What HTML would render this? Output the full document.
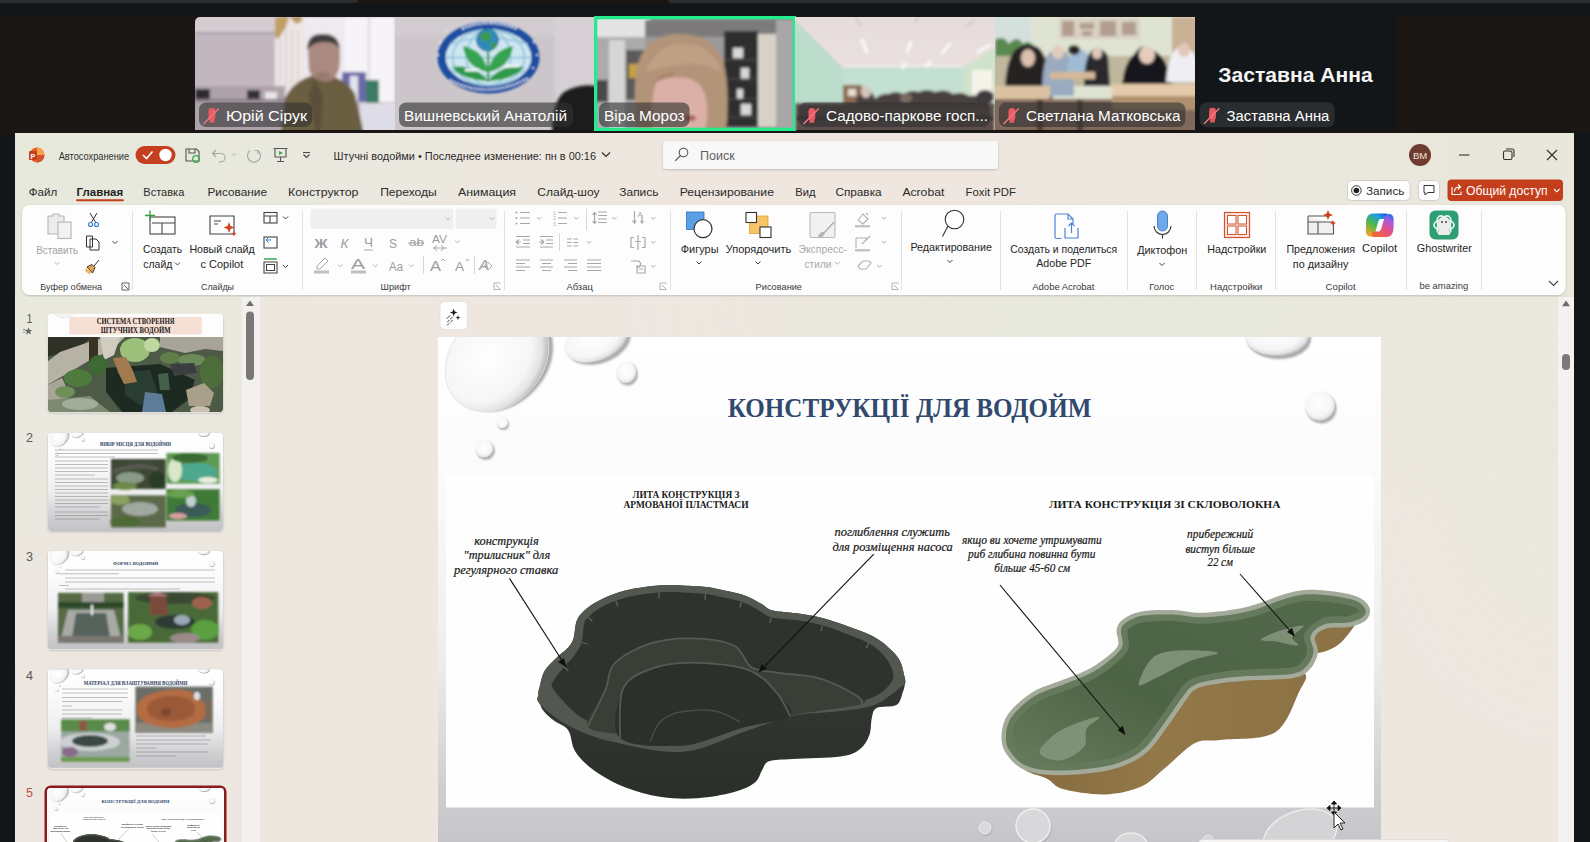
<!DOCTYPE html>
<html><head><meta charset="utf-8">
<style>
*{margin:0;padding:0;box-sizing:border-box}
html,body{width:1590px;height:842px;overflow:hidden;background:#1a1614;font-family:"Liberation Sans",sans-serif}
.a{position:absolute}
</style></head><body>
<div class="a" style="left:0;top:0;width:358px;height:3px;background:#2d2d2d;border-bottom-right-radius:4px"></div>
<div class="a" style="left:668px;top:0;width:922px;height:3px;background:#2d2d2d;border-bottom-left-radius:4px"></div>
<div class="a" style="left:0;top:3px;width:1590px;height:12px;background:#121619"></div>
<div class="a" style="left:0;top:135px;width:15px;height:707px;background:#121619"></div>
<div class="a" style="left:1574px;top:133px;width:16px;height:709px;background:#121619"></div>
<div class="a" style="left:1195px;top:15px;width:201px;height:115px;background:#121619"></div>
<div class="a" style="left:15px;top:133px;width:1559px;height:709px;background:linear-gradient(90deg,#e6e9dc 0%,#ebe8df 25%,#efe6df 45%,#eee6df 62%,#ebe7de 80%,#e8e7db 100%)"></div>

<svg class="a" style="left:0;top:0" width="1590" height="135" viewBox="0 0 1590 135" font-family="Liberation Sans, sans-serif">
<defs>
 <filter id="vb" x="-5%" y="-5%" width="110%" height="110%"><feGaussianBlur stdDeviation="1.4"/></filter>
 <filter id="vb2" x="-20%" y="-20%" width="140%" height="140%"><feGaussianBlur stdDeviation="2.5"/></filter>
 <clipPath id="t1"><path d="M195 22 a5 5 0 0 1 5 -5 h195 v113 h-200 z"/></clipPath>
 <clipPath id="t2"><rect x="395" y="17" width="200" height="113"/></clipPath>
 <clipPath id="t3"><rect x="595" y="17" width="200" height="113"/></clipPath>
 <clipPath id="t4"><rect x="795" y="17" width="200" height="113"/></clipPath>
 <clipPath id="t5"><rect x="995" y="17" width="200" height="113"/></clipPath>
 <linearGradient id="ceil4" x1="0" y1="0" x2="0" y2="1"><stop offset="0" stop-color="#e6dcdc"/><stop offset="1" stop-color="#eee4e2"/></linearGradient>
</defs>
<!-- tile 1 -->
<g clip-path="url(#t1)">
 <g filter="url(#vb)">
  <rect x="190" y="12" width="210" height="123" fill="#c3b7bf"/>
  <rect x="190" y="12" width="90" height="21" fill="#d6ccd2"/>
  <path d="M195 33 h85" stroke="#a89ca8" stroke-width="2"/>
  <rect x="275" y="17" width="30" height="80" fill="#ece6e6"/>
  <g stroke="#d8d0d0" stroke-width="1.5"><path d="M280 30 v60 M286 30 v62 M292 30 v64 M298 30 v65"/></g>
  <path d="M275 17 h14 l-3 10 l-8 12 l-3 -2 z" fill="#c0a060"/>
  <path d="M290 17 h12 v4 l-6 3 z" fill="#b89858"/>
  <rect x="305" y="17" width="90" height="85" fill="#eeeaf0"/>
  <rect x="345" y="17" width="50" height="85" fill="#f6f4f8"/>
  <path d="M369 17 v80" stroke="#d8d4dc" stroke-width="2"/>
  <rect x="190" y="86" width="95" height="50" fill="#aea2aa"/>
  <rect x="195" y="89" width="15" height="10" fill="#2a2a2e"/>
  <rect x="247" y="90" width="13" height="9" fill="#303034"/>
  <rect x="265" y="92" width="12" height="7" fill="#e6e6e6"/>
  <rect x="195" y="99" width="90" height="3" fill="#8a7e88"/>
  <rect x="342" y="72" width="24" height="30" fill="#6a6aa8"/>
  <rect x="350" y="76" width="8" height="26" fill="#e4e4ee"/>
  <rect x="366" y="80" width="13" height="24" fill="#3a7a64"/>
  <rect x="360" y="103" width="40" height="32" fill="#dedce6"/>
  <path d="M281 134 l4 -36 q10 -20 34 -24 q26 2 36 20 l9 40 z" fill="#6a5e40"/>
  <path d="M314 78 l9 18 l-3 38 h-4 l-7 -38 z" fill="#5a5038"/>
  <path d="M308 55 q-1 -20 15 -21 q16 -1 17 18 q1 18 -4 24 q-6 7 -14 5 q-10 -3 -13 -10 z" fill="#aa8a80"/>
  <path d="M307 50 q0 -17 16 -16 q16 0 17 15 q-4 -7 -16 -7 q-11 0 -17 8 z" fill="#3e3c3c"/>
  <rect x="316" y="72" width="14" height="8" fill="#9a7a70"/>
 </g>
 <rect x="199" y="102.5" width="113" height="24.5" rx="7" fill="rgba(50,50,50,0.62)"/><g transform="translate(203 106.5)"><rect x="5.5" y="1.5" width="6.8" height="12.5" rx="3.3" fill="#ec5a62"/><rect x="6.6" y="13.2" width="4.6" height="3" fill="#ec5a62"/><path d="M0.5 17.5 L15.8 2" stroke="#f07a84" stroke-width="1.4"/></g><text x="226" y="120.8" font-size="15.4" fill="#fff" textLength="81" lengthAdjust="spacingAndGlyphs">Юрій Сірук</text>
</g>
<!-- tile 2 -->
<g clip-path="url(#t2)">
 <g filter="url(#vb)">
  <rect x="390" y="12" width="210" height="123" fill="#ccc6ca"/>
  <rect x="390" y="12" width="210" height="25" fill="#d2ccd0"/>
  <rect x="555" y="17" width="45" height="113" fill="#d6d0d4"/>
 </g>
 <g filter="url(#pb)">
  <ellipse cx="488.5" cy="57.5" rx="51" ry="36" fill="#1f4ea0"/>
  <ellipse cx="488.5" cy="57.5" rx="43" ry="28.5" fill="#cde6f0"/>
  <g stroke="#8fc3da" stroke-width="1.6" fill="none"><path d="M450 44 q38 -12 78 0 M446 57.5 h85 M451 71 q37 10 75 0"/><ellipse cx="488.5" cy="57.5" rx="22" ry="28"/><ellipse cx="488.5" cy="57.5" rx="36" ry="28"/></g>
  <g fill="#e8eef8"><circle cx="446" cy="30" r="1"/><circle cx="440" cy="42" r="1"/><circle cx="438" cy="55" r="1"/><circle cx="534" cy="42" r="1"/><circle cx="537" cy="55" r="1"/><circle cx="533" cy="68" r="1"/></g>
  <g stroke="#dfe8f4" stroke-width="2.2" stroke-dasharray="2.2 1.4" fill="none"><path d="M462 29 q27 -12 55 0"/><path d="M450 80 q38 20 78 -2"/></g>
  <rect x="487" y="50" width="2.2" height="32" fill="#2e9a4a"/>
  <path d="M488 72 q-22 -4 -25 -26 q21 4 25 26 z M488 72 q22 -4 25 -26 q-21 4 -25 26 z" fill="#35a34f"/>
  <path d="M488 81 q-26 -1 -36 -14 q23 -3 36 14 z M488 81 q26 -1 36 -14 q-23 -3 -36 14 z" fill="#2e9a4a"/>
  <circle cx="487.5" cy="40" r="11" fill="#2f8ab8" stroke="#1a5a8a" stroke-width="0.8"/>
  <path d="M480 35 q5 -6 10 -2 q3 5 -2 8 q-6 2 -8 -6z M490 43 q4 -3 7 2 l-4 5 z" fill="#3a9a4a"/>
  <path d="M465 70 h14 M505 66 h14" stroke="#f0f4f8" stroke-width="3"/>
 </g>
 <g filter="url(#vb)"><path d="M552 134 q0 -32 12 -42 q18 -10 36 -5 v47 z" fill="#1c1c1e"/></g>
 <rect x="399" y="102.5" width="174" height="24.5" rx="7" fill="rgba(50,50,50,0.62)"/><text x="404" y="120.8" font-size="15.4" fill="#fff" textLength="163" lengthAdjust="spacingAndGlyphs">Вишневський Анатолій</text>
</g>
<!-- tile 3 -->
<g clip-path="url(#t3)">
 <g filter="url(#vb)">
  <rect x="590" y="12" width="210" height="123" fill="#8e8c8c"/>
  <rect x="590" y="12" width="60" height="26" fill="#e4e4e4"/>
  <rect x="645" y="20" width="135" height="17" fill="#7c7a7a"/>
  <rect x="590" y="37" width="57" height="95" fill="#acaaaa"/>
  <rect x="609" y="40" width="16" height="92" fill="#d6d6d6"/>
  <rect x="626" y="50" width="22" height="50" fill="#5a5a5a"/>
  <rect x="629" y="64" width="9" height="14" fill="#c8a040"/>
  <rect x="590" y="80" width="18" height="22" fill="#4a4a4a"/>
  <rect x="645" y="37" width="80" height="95" fill="#9c9a9a"/>
  <rect x="724" y="31" width="34" height="96" fill="#2e2e2e"/>
  <g fill="#d8d8d8"><rect x="733" y="48" width="10" height="10"/><rect x="741" y="68" width="8" height="11"/><rect x="737" y="89" width="6" height="10"/><rect x="741" y="104" width="10" height="11"/></g>
  <g stroke="#555" stroke-width="1"><path d="M724 60 h34 M724 79 h34 M724 99 h34 M724 117 h34"/></g>
  <rect x="758" y="34" width="18" height="93" fill="#d8d2c6"/>
  <rect x="776" y="20" width="24" height="115" fill="#a8a6a6"/>
  <path d="M637 132 q-4 -35 -1 -60 q6 -36 40 -38 q38 -2 48 30 q6 28 2 68 z" fill="#b29479"/>
  <path d="M652 132 q-2 -30 4 -50 q14 -6 30 -4 q16 3 20 20 q3 18 -2 34 z" fill="#dbb0a6"/>
  <path d="M645 72 q12 -30 42 -28 q26 2 35 28 q-16 -10 -36 -8 q-20 2 -41 8 z" fill="#c0a084"/>
  <path d="M655 82 q8 -8 20 -8" stroke="#a87860" stroke-width="2" fill="none"/>
  <ellipse cx="690" cy="118" rx="6" ry="3" fill="#a85a5a"/>
 </g>
 <rect x="599" y="102.5" width="90.5" height="24.5" rx="7" fill="rgba(50,50,50,0.62)"/><text x="604" y="120.8" font-size="15.4" fill="#fff" textLength="80.6" lengthAdjust="spacingAndGlyphs">Віра Мороз</text>
</g>
<rect x="595.65" y="17.65" width="198.7" height="111.7" fill="none" stroke="#24ec8e" stroke-width="3.3"/>
<!-- tile 4 -->
<g clip-path="url(#t4)">
 <g filter="url(#vb)">
  <rect x="790" y="12" width="210" height="123" fill="url(#ceil4)"/>
  <path d="M790 12 v120 h53 v-64 l-48 -48 z" fill="#bcdccc"/>
  <path d="M843 67 h120 v36 h-120 z" fill="#c4e0d2"/>
  <path d="M843 66 h120" stroke="#f4eeea" stroke-width="2"/>
  <path d="M963 67 l37 -22 v70 l-37 -10 z" fill="#cfe2cc"/>
  <rect x="972" y="70" width="20" height="30" fill="#f6f4ea"/>
  <g stroke="#ffffff" stroke-width="2.5" stroke-linecap="round"><path d="M862 40 l5 12 M911 42 l-4 10 M950 44 l-8 9 M990 45 l-12 7 M905 63 l-2 5 M930 62 l-4 4"/></g>
  <g stroke="#c8b8b8" stroke-width="1.5"><path d="M855 17 l6 8 M918 17 l-3 6 M975 20 l-10 7"/></g>
  <rect x="843" y="85" width="19" height="19" fill="#8a6a50"/>
  <rect x="848" y="89" width="8" height="7" fill="#e8e0d0"/>
  <path d="M795 103 h200 v30 h-200 z" fill="#5a4e4c"/>
  <path d="M855 104 q2 -10 10 -13 q8 -1 10 8 q6 -6 14 -5 q6 -4 14 0 q8 -5 16 -2 q8 -4 16 0 q10 -4 18 2 q10 -3 16 2 q10 -2 16 4 v6 h-120 z" fill="#4a4040"/>
  <ellipse cx="866" cy="92" rx="5" ry="6" fill="#d4c4bc"/>
  <ellipse cx="906" cy="98" rx="6" ry="5" fill="#7a6a60"/>
  <ellipse cx="985" cy="97" rx="9" ry="7" fill="#3e3a3a"/>
  <path d="M795 118 h200" stroke="#3a3030" stroke-width="4"/>
 </g>
 <rect x="799" y="102.5" width="190.60000000000002" height="24.5" rx="7" fill="rgba(50,50,50,0.62)"/><g transform="translate(803 106.5)"><rect x="5.5" y="1.5" width="6.8" height="12.5" rx="3.3" fill="#ec5a62"/><rect x="6.6" y="13.2" width="4.6" height="3" fill="#ec5a62"/><path d="M0.5 17.5 L15.8 2" stroke="#f07a84" stroke-width="1.4"/></g><text x="826" y="120.8" font-size="15.4" fill="#fff" textLength="162" lengthAdjust="spacingAndGlyphs">Садово-паркове госп...</text>
</g>
<!-- tile 5 -->
<g clip-path="url(#t5)">
 <g filter="url(#vb)">
  <rect x="990" y="12" width="210" height="123" fill="#dfe3d2"/>
  <rect x="990" y="12" width="40" height="35" fill="#d4e0dc"/>
  <rect x="1059" y="18" width="81" height="21" fill="#d8d0c4"/>
  <g fill="#9a7a6a" opacity="0.6"><rect x="1062" y="21" width="12" height="15"/><rect x="1080" y="23" width="14" height="6"/><rect x="1082" y="31" width="10" height="5"/><rect x="1100" y="21" width="16" height="15"/><rect x="1122" y="22" width="14" height="13"/></g>
  <rect x="1172" y="17" width="25" height="60" fill="#c8b094"/>
  <path d="M995 40 q8 -6 14 4 q8 -10 14 0 q6 -6 12 4 v12 h-40 z" fill="#5a8a50"/>
  <rect x="990" y="56" width="210" height="30" fill="#bfb79e"/>
  <path d="M1005 112 q-2 -48 10 -62 q12 -10 24 -2 q12 12 14 64 z" fill="#262020"/>
  <ellipse cx="1028" cy="58" rx="7" ry="9" fill="#dcc0b0"/>
  <path d="M1042 96 q0 -36 8 -44 q10 -6 18 2 q6 14 6 42 z" fill="#9aaac0"/>
  <ellipse cx="1058" cy="52" rx="6" ry="7" fill="#e4ccbc"/>
  <path d="M1066 78 q2 -22 9 -28 q10 -3 14 8 l3 20 z" fill="#a0bcd4"/>
  <ellipse cx="1074" cy="50" rx="6" ry="5" fill="#2a2828"/>
  <path d="M1084 86 q0 -28 8 -36 q10 -4 16 6 l2 30 z" fill="#2a2a2e"/>
  <ellipse cx="1097" cy="53" rx="5" ry="6" fill="#e0c8bc"/>
  <path d="M1130 70 q2 -20 12 -24 q10 2 10 20 z" fill="#8a8a90"/>
  <rect x="1050" y="72" width="45" height="7" fill="#d6b894"/>
  <rect x="990" y="86" width="60" height="13" fill="#dcc2a2"/>
  <path d="M1122 92 q0 -38 24 -44 q24 4 26 44 z" fill="#18181a"/>
  <ellipse cx="1147" cy="55" rx="8" ry="9" fill="#e6ccbc"/>
  <path d="M1166 82 q2 -30 14 -36 q16 2 17 18 v18 z" fill="#eeeef4"/>
  <ellipse cx="1184" cy="50" rx="6" ry="7" fill="#e4c8b8"/>
  <rect x="1112" y="84" width="90" height="12" fill="#e4caaa"/>
  <rect x="990" y="99" width="210" height="36" fill="#80685a"/>
  <rect x="1112" y="96" width="90" height="14" fill="#b09070"/>
  <path d="M1040 99 v33 M1080 99 v33" stroke="#4a3a34" stroke-width="6"/>
 </g>
 <rect x="999" y="102.5" width="186.4000000000001" height="24.5" rx="7" fill="rgba(50,50,50,0.62)"/><g transform="translate(1003 106.5)"><rect x="5.5" y="1.5" width="6.8" height="12.5" rx="3.3" fill="#ec5a62"/><rect x="6.6" y="13.2" width="4.6" height="3" fill="#ec5a62"/><path d="M0.5 17.5 L15.8 2" stroke="#f07a84" stroke-width="1.4"/></g><text x="1026" y="120.8" font-size="15.4" fill="#fff" textLength="154.5" lengthAdjust="spacingAndGlyphs">Светлана Матковська</text>
</g>
<!-- tile 6 -->
<text x="1218.3" y="81.5" font-size="21" font-weight="bold" fill="#f4f4f4" textLength="154.4" lengthAdjust="spacingAndGlyphs">Заставна Анна</text>
<rect x="1199.6" y="102.3" width="135.10000000000014" height="25.0" rx="7" fill="#2a2d30"/><g transform="translate(1203.6 106.3)"><rect x="5.5" y="1.5" width="6.8" height="12.5" rx="3.3" fill="#ec5a62"/><rect x="6.6" y="13.2" width="4.6" height="3" fill="#ec5a62"/><path d="M0.5 17.5 L15.8 2" stroke="#f07a84" stroke-width="1.4"/></g><text x="1226.6" y="120.8" font-size="15.4" fill="#fff" textLength="102.8" lengthAdjust="spacingAndGlyphs">Заставна Анна</text>
</svg>
<svg class="a" style="left:0;top:0" width="1590" height="842" viewBox="0 0 1590 842" font-family="Liberation Sans, sans-serif">
<defs>
<filter id="sh1" x="-5%" y="-20%" width="110%" height="150%"><feDropShadow dx="0" dy="1" stdDeviation="1" flood-color="#000" flood-opacity="0.18"/></filter>
</defs>
<!-- ===== Title bar ===== -->
<g id="titlebar">
  <!-- ppt logo -->
  <circle cx="37" cy="155" r="7.5" fill="#e8602c"/>
  <path d="M37 147.5 A7.5 7.5 0 0 1 44.5 155 L37 155 Z" fill="#f6a04c"/>
  <path d="M37 155 L44.5 155 A7.5 7.5 0 0 1 37 162.5 Z" fill="#d35230"/>
  <rect x="29" y="151" width="8" height="9" rx="1" fill="#c43e1c"/>
  <text x="30.6" y="158.7" font-size="7" font-weight="bold" fill="#fff">P</text>
  <text x="58.7" y="159.5" font-size="10.3" fill="#333" textLength="70.5" lengthAdjust="spacingAndGlyphs">Автосохранение</text>
  <rect x="135.5" y="146" width="40" height="18" rx="9" fill="#c4401f"/>
  <path d="M143 155 L146.5 158.5 L152.5 151.5" stroke="#fff" stroke-width="1.6" fill="none"/>
  <circle cx="165.5" cy="155" r="6.2" fill="#fff"/>
  <!-- save -->
  <path d="M186 149 h10.5 l2.5 2.5 v9.5 h-13 z M189 149 v4 h6 v-4" stroke="#555" stroke-width="1.1" fill="none"/>
  <circle cx="196" cy="159" r="3.3" fill="none" stroke="#3aa757" stroke-width="1.3"/>
  <!-- undo -->
  <path d="M216 150 l-3.5 3.5 l3.5 3.5 M212.8 153.5 h8 a4.2 4.2 0 0 1 0 8.4 h-2" stroke="#a9a9a9" stroke-width="1.2" fill="none"/>
  <path d="M232 153.5 l2 2 l2 -2" stroke="#b0b0b0" stroke-width="1" fill="none"/>
  <!-- redo -->
  <path d="M258 150.5 a6.5 6.5 0 1 1 -8 0 M258 150.5 v3.5 M258 150.5 h-3.5" stroke="#a9a9a9" stroke-width="1.2" fill="none"/>
  <!-- present -->
  <path d="M273.5 148.5 h14 M275 148.5 v8.5 h11 v-8.5 M280.5 157 v4.5 M277 161.5 h7" stroke="#555" stroke-width="1.1" fill="none"/>
  <path d="M279 151 l4 2 l-4 2 z" fill="#3aa757"/>
  <!-- customize -->
  <path d="M303 152.5 h7 M303.5 154.5 l3 3 l3 -3" stroke="#444" stroke-width="1.1" fill="none"/>
  <text x="333.6" y="159.5" font-size="11" fill="#2b2b2b" textLength="262.4" lengthAdjust="spacingAndGlyphs">Штучні водойми • Последнее изменение: пн в 00:16</text>
  <path d="M602 152.5 l4 4 l4 -4" stroke="#333" stroke-width="1.2" fill="none"/>
  <!-- search -->
  <rect x="663" y="141" width="335" height="28" rx="4" fill="#f9f8f8" filter="url(#sh1)"/>
  <circle cx="683.5" cy="152.5" r="4.3" fill="none" stroke="#555" stroke-width="1.1"/>
  <path d="M680.5 155.5 l-5.3 5.3" stroke="#555" stroke-width="1.2"/>
  <text x="700" y="160.2" font-size="12" fill="#5f5f5f" textLength="34.7" lengthAdjust="spacingAndGlyphs">Поиск</text>
  <!-- avatar -->
  <circle cx="1420" cy="155" r="11" fill="#6f3b2f"/>
  <text x="1420" y="158.8" font-size="9.5" fill="#f3e6e0" text-anchor="middle">BM</text>
  <path d="M1459 155 h10.5" stroke="#333" stroke-width="1.1"/>
  <rect x="1503.5" y="151" width="8.5" height="8.5" rx="1.5" fill="none" stroke="#333" stroke-width="1.1"/>
  <path d="M1506 149 h6 a2 2 0 0 1 2 2 v6" stroke="#333" stroke-width="1.1" fill="none"/>
  <path d="M1547 150 l10 10 M1557 150 l-10 10" stroke="#333" stroke-width="1.2"/>
</g>
<!-- ===== Tabs ===== -->
<g id="tabs" font-size="11.6" fill="#2b2b2b">
  <text x="28.8" y="195.6" textLength="28.4" lengthAdjust="spacingAndGlyphs">Файл</text>
  <text x="76.6" y="195.6" font-weight="bold" fill="#1f1f1f" textLength="46.5" lengthAdjust="spacingAndGlyphs">Главная</text>
  <rect x="76" y="199.3" width="48" height="2" rx="1" fill="#c43e1c"/>
  <text x="143.3" y="195.6" textLength="41" lengthAdjust="spacingAndGlyphs">Вставка</text>
  <text x="207.4" y="195.6" textLength="59.6" lengthAdjust="spacingAndGlyphs">Рисование</text>
  <text x="288" y="195.6" textLength="70.4" lengthAdjust="spacingAndGlyphs">Конструктор</text>
  <text x="380.2" y="195.6" textLength="56.6" lengthAdjust="spacingAndGlyphs">Переходы</text>
  <text x="458" y="195.6" textLength="58" lengthAdjust="spacingAndGlyphs">Анимация</text>
  <text x="537.3" y="195.6" textLength="62.2" lengthAdjust="spacingAndGlyphs">Слайд-шоу</text>
  <text x="619.3" y="195.6" textLength="39.2" lengthAdjust="spacingAndGlyphs">Запись</text>
  <text x="679.7" y="195.6" textLength="94.3" lengthAdjust="spacingAndGlyphs">Рецензирование</text>
  <text x="795.3" y="195.6" textLength="20.3" lengthAdjust="spacingAndGlyphs">Вид</text>
  <text x="835.4" y="195.6" textLength="46.2" lengthAdjust="spacingAndGlyphs">Справка</text>
  <text x="902.4" y="195.6" textLength="41.9" lengthAdjust="spacingAndGlyphs">Acrobat</text>
  <text x="965.6" y="195.6" textLength="50.4" lengthAdjust="spacingAndGlyphs">Foxit PDF</text>
  <!-- right buttons -->
  <rect x="1347.5" y="180.5" width="62.5" height="20" rx="4" fill="#fff" stroke="#d0d0d0" stroke-width="1"/>
  <circle cx="1356.4" cy="190.5" r="4.8" fill="none" stroke="#333" stroke-width="1"/>
  <circle cx="1356.4" cy="190.5" r="2.8" fill="#222"/>
  <text x="1366" y="195" font-size="11.5" textLength="38.3" lengthAdjust="spacingAndGlyphs">Запись</text>
  <rect x="1418.5" y="180.5" width="21" height="20" rx="4" fill="#fff" stroke="#d0d0d0" stroke-width="1"/>
  <path d="M1424 185.5 h10 v7 h-6 l-3 2.5 v-2.5 h-1 z" fill="none" stroke="#333" stroke-width="1"/>
  <rect x="1447.5" y="179.5" width="115.5" height="21.5" rx="4" fill="#c43e1c"/>
  <path d="M1452 187 v7.5 h9 v-3 M1454.5 191.5 c0-3 2-4.5 5.5-4.5 M1458 184.5 l2.5 2.5 l-2.5 2.5" stroke="#fff" stroke-width="1.1" fill="none"/>
  <text x="1466" y="195" font-size="12" fill="#fff" textLength="81.6" lengthAdjust="spacingAndGlyphs">Общий доступ</text>
  <path d="M1554 189 l2.8 2.8 l2.8 -2.8" stroke="#fff" stroke-width="1.1" fill="none"/>
</g>
<!-- ===== Ribbon ===== -->
<g id="ribbon">
  <rect x="22" y="205" width="1543.5" height="90" rx="8" fill="#fdfdfd" filter="url(#sh1)"/>
  <g stroke="#e1e1e1" stroke-width="1">
    <path d="M132.5 211 v79 M302.5 211 v79 M504.5 211 v79 M670.5 211 v79 M901.5 211 v79 M1000.5 211 v79 M1127.5 211 v79 M1196.5 211 v79 M1275.5 211 v79 M1406.5 211 v79 M1481.5 211 v79"/>
    <path d="M586.5 209 v21 M559.5 233 v18 M423.5 256 v18 M474.5 256 v18" stroke="#d8d8d8"/>
  </g>
  <!-- group labels -->
  <g font-size="9.5" fill="#3b3b3b">
    <text x="40.2" y="289.6" textLength="62" lengthAdjust="spacingAndGlyphs">Буфер обмена</text>
    <text x="201" y="289.8" textLength="33" lengthAdjust="spacingAndGlyphs">Слайды</text>
    <text x="380.6" y="289.6" textLength="30.1" lengthAdjust="spacingAndGlyphs">Шрифт</text>
    <text x="566.4" y="290" textLength="26.4" lengthAdjust="spacingAndGlyphs">Абзац</text>
    <text x="755.6" y="290" textLength="46.4" lengthAdjust="spacingAndGlyphs">Рисование</text>
    <text x="1032.3" y="289.5" textLength="62.1" lengthAdjust="spacingAndGlyphs">Adobe Acrobat</text>
    <text x="1149.2" y="290" textLength="24.9" lengthAdjust="spacingAndGlyphs">Голос</text>
    <text x="1210" y="290" textLength="52.3" lengthAdjust="spacingAndGlyphs">Надстройки</text>
    <text x="1325.6" y="289.7" textLength="30.1" lengthAdjust="spacingAndGlyphs">Copilot</text>
    <text x="1419.5" y="289" textLength="48.7" lengthAdjust="spacingAndGlyphs">be amazing</text>
  </g>
  <!-- launchers -->
  <g stroke="#666" stroke-width="0.9" fill="none">
    <path d="M122 283 h7 v7 M122 283 v7 h7 M124 285 l4 4" stroke="#555"/>
    <path d="M494 283 h6.5 M494 283 v6.5 h6.5 M496 285 l4 4" stroke="#aaa"/>
    <path d="M660 283 h6.5 M660 283 v6.5 h6.5 M662 285 l4 4" stroke="#aaa"/>
    <path d="M892 283 h6.5 M892 283 v6.5 h6.5 M894 285 l4 4" stroke="#aaa"/>
  </g>
  <!-- main labels -->
  <g font-size="10.6" fill="#262626">
    <text x="36.2" y="254" fill="#a3a3a3" textLength="41.9" lengthAdjust="spacingAndGlyphs">Вставить</text>
    <text x="143" y="253.2" textLength="39" lengthAdjust="spacingAndGlyphs">Создать</text>
    <text x="143.3" y="268" textLength="29" lengthAdjust="spacingAndGlyphs">слайд</text>
    <text x="189.4" y="253.2" textLength="65.3" lengthAdjust="spacingAndGlyphs">Новый слайд</text>
    <text x="200.5" y="268" textLength="42.8" lengthAdjust="spacingAndGlyphs">с Copilot</text>
    <text x="680.8" y="253" textLength="37.7" lengthAdjust="spacingAndGlyphs">Фигуры</text>
    <text x="725.7" y="253" textLength="65.5" lengthAdjust="spacingAndGlyphs">Упорядочить</text>
    <text x="798.5" y="253" fill="#a8a8a8" textLength="48.3" lengthAdjust="spacingAndGlyphs">Экспресс-</text>
    <text x="804.5" y="268" fill="#a8a8a8" textLength="27" lengthAdjust="spacingAndGlyphs">стили</text>
    <text x="910.4" y="251" textLength="81.5" lengthAdjust="spacingAndGlyphs">Редактирование</text>
    <text x="1010.3" y="252.7" textLength="106.9" lengthAdjust="spacingAndGlyphs">Создать и поделиться</text>
    <text x="1036.2" y="267" textLength="55.1" lengthAdjust="spacingAndGlyphs">Adobe PDF</text>
    <text x="1137.2" y="254" textLength="50.1" lengthAdjust="spacingAndGlyphs">Диктофон</text>
    <text x="1207.3" y="252.5" textLength="59.1" lengthAdjust="spacingAndGlyphs">Надстройки</text>
    <text x="1286.4" y="253" textLength="68.7" lengthAdjust="spacingAndGlyphs">Предложения</text>
    <text x="1292.8" y="268" textLength="55.6" lengthAdjust="spacingAndGlyphs">по дизайну</text>
    <text x="1362" y="252" textLength="35.1" lengthAdjust="spacingAndGlyphs">Copilot</text>
    <text x="1416.8" y="252" textLength="55.1" lengthAdjust="spacingAndGlyphs">Ghostwriter</text>
  </g>
  <!-- chevrons -->
  <g stroke="#444" stroke-width="1" fill="none">
    <path d="M54.5 262 l2.5 2.5 l2.5 -2.5" stroke="#b5b5b5"/>
    <path d="M112.5 241 l2.5 2.5 l2.5 -2.5"/>
    <path d="M175 262.5 l2.5 2.5 l2.5 -2.5"/>
    <path d="M283 216.5 l2.5 2.5 l2.5 -2.5"/>
    <path d="M283 265 l2.5 2.5 l2.5 -2.5"/>
    <path d="M696.5 261.5 l2.5 2.5 l2.5 -2.5"/>
    <path d="M755.5 261.5 l2.5 2.5 l2.5 -2.5"/>
    <path d="M947.5 260 l2.5 2.5 l2.5 -2.5"/>
    <path d="M1159.5 263 l2.5 2.5 l2.5 -2.5"/>
    <path d="M1549 281 l4.5 4.5 l4.5 -4.5" stroke-width="1.1"/>
    <g stroke="#b0b0b0">
      <path d="M835 262 l2.3 2.3 l2.3 -2.3"/>
      <path d="M881.5 217 l2.3 2.3 l2.3 -2.3"/>
      <path d="M881.5 241 l2.3 2.3 l2.3 -2.3"/>
      <path d="M877 265 l2.3 2.3 l2.3 -2.3"/>
      <path d="M445.5 216.5 l2.3 2.3 l2.3 -2.3"/>
      <path d="M487.5 216.5 l2.3 2.3 l2.3 -2.3"/>
      <path d="M455 240.5 l2.3 2.3 l2.3 -2.3"/>
      <path d="M338 264.5 l2.3 2.3 l2.3 -2.3"/>
      <path d="M373 264.5 l2.3 2.3 l2.3 -2.3"/>
      <path d="M409 264.5 l2.3 2.3 l2.3 -2.3"/>
      <path d="M537 217 l2.3 2.3 l2.3 -2.3"/>
      <path d="M574 217 l2.3 2.3 l2.3 -2.3"/>
      <path d="M612 217 l2.3 2.3 l2.3 -2.3"/>
      <path d="M651 217 l2.3 2.3 l2.3 -2.3"/>
      <path d="M586.5 241 l2.3 2.3 l2.3 -2.3"/>
      <path d="M651 241 l2.3 2.3 l2.3 -2.3"/>
      <path d="M651 265 l2.3 2.3 l2.3 -2.3"/>
    </g>
  </g>
  <!-- clipboard icons -->
  <g fill="none" stroke="#b5b5b5" stroke-width="1.1">
    <path d="M48 216 h5 v-2 h6 v2 h5 v18 h-16 z" fill="#ececec"/>
    <rect x="58" y="222" width="13" height="16.5" fill="#f2f2f2"/>
  </g>
  <path d="M90 213 l6 10 M97 213 l-6 10" stroke="#333" stroke-width="1"/>
  <circle cx="90.5" cy="224.5" r="2" fill="none" stroke="#2d7bd0" stroke-width="1.1"/>
  <circle cx="96.5" cy="224.5" r="2" fill="none" stroke="#2d7bd0" stroke-width="1.1"/>
  <path d="M86.5 236 h6 v11 h-6 z M90 239 h6 l3 3 v8 h-9 z" fill="#fff" stroke="#333" stroke-width="1"/>
  <path d="M99 260 l-5 6 M87 267 l5 -2.5 l3 3 l-2.5 5.5 z" stroke="#333" stroke-width="1" fill="#f0a04a"/>
  <path d="M86 268 l6 5 l-3 1 l-4 -3 z" fill="#f5b262"/>
  <!-- slides icons -->
  <g fill="none" stroke="#444" stroke-width="1.1">
    <rect x="150" y="217" width="25" height="17"/>
    <path d="M152 223 h23 M162 223 v11"/>
    <path d="M210 216 h24 v18 h-24 z"/>
    <path d="M214 221 h7 M214 224 h4"/>
    <rect x="264" y="212.5" width="13" height="10.5"/>
    <path d="M264 216 h13 M270 216 v7"/>
    <rect x="264" y="237" width="13" height="11"/>
    <path d="M264 262 h13 v11 h-13 z M266.5 264.5 h8 v6 h-8 z"/>
  </g>
  <path d="M150 210.5 v10 M145 215.5 h10" stroke="#2f9a4a" stroke-width="1.3"/>
  <path d="M229 222 l1.5 4 l4 1.5 l-4 1.5 l-1.5 4 l-1.5 -4 l-4 -1.5 l4 -1.5 z" fill="#d13f1b"/>
  <path d="M234 231 l0.8 2 l2 0.8 l-2 0.8 l-0.8 2 l-0.8 -2 l-2 -0.8 l2 -0.8 z" fill="#d13f1b"/>
  <path d="M266 240 l2.5 -2.5 M266 240 l2.5 2.5 M266 240 h5" stroke="#2d7bd0" stroke-width="1"/>
  <path d="M264 259 h13" stroke="#3aa757" stroke-width="1.5"/>
  <!-- font group -->
  <rect x="310.5" y="208.5" width="143" height="20.5" rx="3" fill="#efeff0"/>
  <rect x="455.5" y="208.5" width="41" height="20.5" rx="3" fill="#efeff0"/>
  <path d="M445.5 217.5 l2.3 2.3 l2.3 -2.3 M489.5 217.5 l2.3 2.3 l2.3 -2.3" stroke="#b0b0b0" stroke-width="1" fill="none"/>
  <g font-size="12.5" fill="#9c9c9c">
    <text x="314.5" y="247.5" font-weight="bold" font-size="12.5" textLength="13" lengthAdjust="spacingAndGlyphs">Ж</text>
    <text x="340.5" y="247.5" font-style="italic" textLength="8" lengthAdjust="spacingAndGlyphs">К</text>
    <text x="364" y="247" textLength="9" lengthAdjust="spacingAndGlyphs">Ч</text>
    <text x="389" y="247.5" textLength="8" lengthAdjust="spacingAndGlyphs">S</text>
    <text x="409" y="246" font-size="11" textLength="15" lengthAdjust="spacingAndGlyphs">ab</text>
    <text x="432" y="243" font-size="10.5" textLength="15" lengthAdjust="spacingAndGlyphs">AV</text>
    <text x="351" y="268.5" font-size="15" textLength="14" lengthAdjust="spacingAndGlyphs">A</text>
    <text x="389" y="270.5" font-size="12" textLength="14" lengthAdjust="spacingAndGlyphs">Aa</text>
    <text x="430" y="270.5" font-size="14" textLength="11" lengthAdjust="spacingAndGlyphs">A</text>
    <text x="455" y="270.5" font-size="12" textLength="9" lengthAdjust="spacingAndGlyphs">A</text>
    <text x="479" y="270" font-size="14" font-style="italic" textLength="10" lengthAdjust="spacingAndGlyphs">A</text>
  </g>
  <g stroke="#a8a8a8" stroke-width="1" fill="none">
    <path d="M364 250 h9 M408 243 h16 M433 248 h14 M441 245 l3 3 l-3 3 M437 245 l-3 3 l3 3"/>
    <path d="M441 261 l2 -2 l2 2 M466 259 l1.5 2 l1.5 -2"/>
    <path d="M317 266 l8 -8 l3 3 l-8 8 h-3 z"/>
    <path d="M484 266 l4 -4 l4 4 l-4 4 z"/>
  </g>
  <rect x="314" y="270.5" width="15" height="3" fill="#c0c0c0"/>
  <rect x="351" y="270.5" width="15" height="3" fill="#c0c0c0"/>
  <!-- paragraph group -->
  <g stroke="#a8a8a8" stroke-width="1.2" fill="none">
    <path d="M520 212.5 h10 M520 218 h10 M520 223.5 h10"/>
    <path d="M558 212.5 h9 M558 218 h9 M558 223.5 h9"/>
    <path d="M598 212 h9 M598 215.5 h9 M598 219 h9 M598 222.5 h9 M594.5 213 v10 M592.5 215 l2 -2.5 l2 2.5 M592.5 221 l2 2.5 l2 -2.5"/>
    <path d="M634.5 211 v12 l-2 -2.5 M634.5 223 l2 -2.5 M642 216 v7 l-1.5 -2 M642 223 l1.5 -2"/>
    <path d="M516 236.5 h14 M523 240 h7 M523 243.5 h7 M516 247 h14 M516 242 l3 -2.5 M516 242 l3 2.5 M516 242 h5"/>
    <path d="M540 236.5 h13 M546 240 h7 M546 243.5 h7 M540 247 h13 M544 242 l-3 -2.5 M544 242 l-3 2.5 M539 242 h5"/>
    <path d="M567 239 h4.5 M573.5 239 h4.5 M567 242.5 h4.5 M573.5 242.5 h4.5 M567 246 h4.5 M573.5 246 h4.5"/>
    <path d="M631 237.5 h3 M631 237.5 v10 h3 M645 237.5 h-3 M645 237.5 v10 h-3 M638 235 v15 M635 241.5 h6"/>
    <path d="M516 260 h14 M516 263.5 h9 M516 267 h14 M516 270.5 h9"/>
    <path d="M540 260 h13 M542 263.5 h9 M540 267 h13 M542 270.5 h9"/>
    <path d="M564 260 h13 M568 263.5 h9 M564 267 h13 M568 270.5 h9"/>
    <path d="M587 260 h14 M587 263.5 h14 M587 267 h14 M587 270.5 h14"/>
    <path d="M631 261 h8 l2 3 l-2 3 h-3 M637 266 h8 v7 h-8 z M639 269 h4"/>
  </g>
  <g fill="#aaa"><circle cx="516.5" cy="212.5" r="1.1"/><circle cx="516.5" cy="218" r="1.1"/><circle cx="516.5" cy="223.5" r="1.1"/></g>
  <g font-size="5" fill="#aaa"><text x="553" y="214.5">1</text><text x="553" y="220">2</text><text x="553" y="225.5">3</text><text x="637.5" y="217" font-size="8">A</text></g>
  <!-- drawing -->
  <rect x="686.5" y="212" width="17.5" height="17.5" fill="#5aa0e6" stroke="#2f6fc0" stroke-width="0.8"/>
  <circle cx="703" cy="228.7" r="9" fill="#fff" stroke="#333" stroke-width="1.2"/>
  <rect x="749.5" y="216" width="18.5" height="17.5" fill="#f6c366" stroke="#e0a030" stroke-width="0.8"/>
  <rect x="746" y="212.5" width="10.5" height="10" fill="#fff" stroke="#333" stroke-width="1.1"/>
  <rect x="760" y="227" width="11" height="10.5" fill="#fff" stroke="#333" stroke-width="1.1"/>
  <rect x="810" y="212.5" width="25" height="25" rx="1.5" fill="#f1f1f1" stroke="#b9b9b9" stroke-width="1.1"/>
  <path d="M834 222 l-10 11 M819 236 c2 -3 4 -4 5 -3 c0 2 -2 4 -5 3 z" stroke="#b0b0b0" stroke-width="1.5" fill="#c8c8c8"/>
  <g stroke="#b0b0b0" stroke-width="1.1" fill="none">
    <path d="M858 220 l5 -6 l5 5 l-5 5 z M866 213 l2 2"/>
    <path d="M856 238 h10 v3 M856 238 v10 M870 236 l-7 7 l-1.5 1"/>
    <path d="M858 266 l5 -5 h6 l2 2 l-5 6 h-6 z"/>
  </g>
  <rect x="855" y="225" width="15" height="2.5" fill="#c4c4c4"/>
  <rect x="855" y="249" width="15" height="2.5" fill="#c4c4c4"/>
  <!-- editing -->
  <circle cx="954.5" cy="219.5" r="9.3" fill="none" stroke="#333" stroke-width="1.1"/>
  <path d="M948 226 l-5.5 10.5" stroke="#333" stroke-width="1.1"/>
  <!-- pdf -->
  <path d="M1063 214 h-6.5 a1.5 1.5 0 0 0 -1.5 1.5 v21.5 a1.5 1.5 0 0 0 1.5 1.5 h5 M1063 214 h5 l5 5 v5 M1068 214 v5 h5" stroke="#4a86d8" stroke-width="1.2" fill="none"/>
  <path d="M1065 228 v10 h13 v-10 M1071.5 233 v-10 M1068.5 226 l3 -3 l3 3" stroke="#4a86d8" stroke-width="1.2" fill="none"/>
  <!-- mic -->
  <rect x="1157.5" y="211" width="10" height="20" rx="5" fill="#6fa8e8" stroke="#2f6fc0" stroke-width="0.8"/>
  <path d="M1154 226 a8.5 8.5 0 0 0 17 0 M1162.5 234.5 v4" stroke="#333" stroke-width="1.1" fill="none"/>
  <!-- addins -->
  <rect x="1224.5" y="212.5" width="25" height="25" fill="#fbe8e1" stroke="#d35230" stroke-width="1.2"/>
  <g fill="#fff" stroke="#d35230" stroke-width="1"><rect x="1227.5" y="215.5" width="8.5" height="8.5"/><rect x="1238" y="215.5" width="8.5" height="8.5"/><rect x="1227.5" y="226" width="8.5" height="8.5"/><rect x="1238" y="226" width="8.5" height="8.5"/></g>
  <!-- design ideas -->
  <path d="M1308 216 h21 M1308 216 v18 h25.5 v-10 M1308 222 h25 M1318 222 v12" stroke="#555" stroke-width="1.1" fill="#f0f0f0"/>
  <path d="M1328 210 l1.4 3.6 l3.6 1.4 l-3.6 1.4 l-1.4 3.6 l-1.4 -3.6 l-3.6 -1.4 l3.6 -1.4 z" fill="#d13f1b"/>
  <path d="M1333 220 l0.9 2.1 l2.1 0.9 l-2.1 0.9 l-0.9 2.1 l-0.9 -2.1 l-2.1 -0.9 l2.1 -0.9 z" fill="#d13f1b"/>
  <!-- copilot -->
  <defs>
    <linearGradient id="cop1" x1="0.2" y1="1" x2="0.8" y2="0"><stop offset="0" stop-color="#f4a52a"/><stop offset="0.45" stop-color="#4cb84a"/><stop offset="0.8" stop-color="#1f9be0"/><stop offset="1" stop-color="#1660d8"/></linearGradient>
    <linearGradient id="cop2" x1="0.2" y1="1" x2="0.8" y2="0"><stop offset="0" stop-color="#f26a2c"/><stop offset="0.45" stop-color="#e0508a"/><stop offset="0.8" stop-color="#a05ae8"/><stop offset="1" stop-color="#2b6ee6"/></linearGradient>
  </defs>
  <path d="M1373 213.5 H1386 C1388 213.5 1388.5 215 1387.5 217 L1386.8 219 H1381 C1379.5 219 1378.8 220 1378.3 221.5 L1375 233 C1374.3 235.5 1373 236.5 1370.5 236.5 C1367.5 236.5 1365.8 234.5 1365.8 231 L1366 222 C1366.5 217 1368.5 213.5 1373 213.5 Z" fill="url(#cop1)"/>
  <path d="M1386.5 237 H1373.5 C1371.5 237 1371 235.5 1372 233.5 L1372.7 231.5 H1378.5 C1380 231.5 1380.7 230.5 1381.2 229 L1384.5 217.5 C1385.2 215 1386.5 214 1389 214 C1392 214 1393.7 216 1393.7 219.5 L1393.5 228.5 C1393 233.5 1391 237 1386.5 237 Z" fill="url(#cop2)"/>
  <!-- ghostwriter -->
  <rect x="1429.5" y="210.5" width="29" height="29" rx="6" fill="#2e9f74"/>
  <g fill="none" stroke="#eaf6f0" stroke-width="1.6">
   <ellipse cx="1444" cy="225" rx="10" ry="5.5"/>
   <ellipse cx="1444" cy="225" rx="10" ry="5.5" transform="rotate(60 1444 225)"/>
   <ellipse cx="1444" cy="225" rx="10" ry="5.5" transform="rotate(120 1444 225)"/>
  </g>
  <path d="M1438.5 235 v-13 a5.5 5.5 0 0 1 11 0 v13 z" fill="#ececec"/>
  <circle cx="1442" cy="222" r="0.9" fill="#333"/><circle cx="1446" cy="222" r="0.9" fill="#333"/>
</g>
</svg>

<!-- ===== panel & canvas backgrounds ===== -->
<div class="a" style="left:15px;top:297px;width:227px;height:545px;background:linear-gradient(180deg,#e9e9de 0%,#ebe8df 35%,#ede6e0 70%,#eee6e0 100%)"></div>
<div class="a" style="left:242px;top:297px;width:17.5px;height:545px;background:#f3f1f0"></div>
<div class="a" style="left:259.5px;top:297px;width:1298.5px;height:545px;background:radial-gradient(ellipse 520px 260px at 880px 0px,rgba(230,233,219,0.95),rgba(230,233,219,0) 100%),radial-gradient(ellipse 200px 300px at 1300px 150px,rgba(232,233,220,0.7),rgba(232,233,220,0) 100%),#eee7e0"></div>
<div class="a" style="left:1558px;top:297px;width:16px;height:545px;background:#f3f2f1"></div>
<svg class="a" style="left:0;top:0" width="1590" height="842" viewBox="0 0 1590 842" font-family="Liberation Sans, sans-serif">
<defs>
 <filter id="pb" x="-10%" y="-10%" width="120%" height="120%"><feGaussianBlur stdDeviation="0.9"/></filter>
 <filter id="pb3" x="-10%" y="-10%" width="120%" height="120%"><feGaussianBlur stdDeviation="0.6"/></filter>
 <filter id="pb2" x="-10%" y="-10%" width="120%" height="120%"><feGaussianBlur stdDeviation="1.6"/></filter>
 <filter id="tsh" x="-5%" y="-5%" width="110%" height="115%"><feDropShadow dx="0" dy="1" stdDeviation="1" flood-color="#000" flood-opacity="0.2"/></filter>
 <clipPath id="c1"><rect x="47.8" y="313.8" width="175.2" height="98.4" rx="4"/></clipPath>
 <clipPath id="c2"><rect x="48" y="432.9" width="175" height="98" rx="4"/></clipPath>
 <clipPath id="c3"><rect x="48" y="551.1" width="175" height="98.4" rx="4"/></clipPath>
 <clipPath id="c4"><rect x="48" y="669.5" width="175" height="99" rx="4"/></clipPath>
 <clipPath id="c5"><rect x="47.5" y="788" width="176" height="99" rx="3"/></clipPath>
 <clipPath id="p1"><rect x="47.8" y="337" width="175.2" height="75.2"/></clipPath>
</defs>
<!-- scrollbars -->
<path d="M246 306 l4 -5.5 l4 5.5 z" fill="#6f6d6d"/>
<rect x="246" y="311.5" width="8" height="68.5" rx="4" fill="#7a7878"/>
<path d="M1562 306.3 l4 -5.8 l4 5.8 z" fill="#6f6d6d"/>
<rect x="1562" y="354" width="8" height="16" rx="4" fill="#7a7878"/>
<!-- design ideas button -->
<rect x="440" y="301.6" width="27.4" height="28" rx="5" fill="#fdfdfd" stroke="#dedede" stroke-width="0.8"/>
<path d="M453.7 308.7 l1.1 2.7 l2.7 1.1 l-2.7 1.1 l-1.1 2.7 l-1.1 -2.7 l-2.7 -1.1 l2.7 -1.1 z M458 315.3 l0.7 1.6 l1.6 0.7 l-1.6 0.7 l-0.7 1.6 l-0.7 -1.6 l-1.6 -0.7 l1.6 -0.7 z" fill="#1e1e1e"/>
<g stroke="#2a2a2a" stroke-width="0.9" stroke-linecap="round"><path d="M447 318.5 l2.8 -2.8"/><path d="M447.5 322 l1.8 -1.8 M450.5 319 l1.8 -1.8"/><path d="M447.3 325 l1.6 -1.6 M450.8 322 l1.8 -1.8"/></g>
<!-- slide numbers -->
<g font-size="12.5" fill="#5a5a5a">
 <text x="26.5" y="322.5" textLength="6" lengthAdjust="spacingAndGlyphs">1</text>
 <text x="26" y="441.5" textLength="7" lengthAdjust="spacingAndGlyphs">2</text>
 <text x="26" y="560.5" textLength="7" lengthAdjust="spacingAndGlyphs">3</text>
 <text x="26" y="679.5" textLength="7" lengthAdjust="spacingAndGlyphs">4</text>
 <text x="26" y="796.5" fill="#c0504d" textLength="7" lengthAdjust="spacingAndGlyphs">5</text>
</g>
<path d="M28.5 327.5 l1.1 2.4 l2.6 0.2 l-2 1.7 l0.7 2.6 l-2.4 -1.4 l-2.4 1.4 l0.7 -2.6 l-2 -1.7 l2.6 -0.2 z" fill="#666"/>
<path d="M23 329.5 h2.5 M23 332 h2" stroke="#777" stroke-width="0.8"/>

<!-- thumb 1 -->
<g filter="url(#tsh)"><rect x="47.8" y="313.8" width="175.2" height="98.4" rx="4" fill="#fff"/></g>
<g clip-path="url(#c1)">
 <rect x="47.8" y="313.8" width="175.2" height="24" fill="#fdfdfd"/>
 <ellipse cx="64" cy="310" rx="11" ry="8" fill="#f4f4f4" stroke="#ddd" stroke-width="0.6"/>
 <rect x="69.4" y="317" width="132.5" height="17.4" fill="#f6dfd4"/>
 <g font-family="Liberation Serif, serif" font-weight="bold" font-size="7.2" fill="#222">
  <text x="96.7" y="324.2" textLength="77.9" lengthAdjust="spacingAndGlyphs">СИСТЕМА СТВОРЕННЯ</text>
  <text x="100.8" y="332.6" textLength="69.7" lengthAdjust="spacingAndGlyphs">ШТУЧНИХ ВОДОЙМ</text>
 </g>
 <g clip-path="url(#p1)"><g filter="url(#pb3)">
  <rect x="47.8" y="337" width="175.2" height="75.2" fill="#4e5a44"/>
  <path d="M47 337 h45 l-10 8 l-20 8 l-15 4 z" fill="#2e3328"/>
  <path d="M60 352 L95 340 L110 337 L125 337 L112 350 L90 360 L70 372 L47 385 L47 362 Z" fill="#b7b2a6"/>
  <path d="M47 385 L62 378 L70 395 L55 412 L47 412 Z" fill="#a8a498"/>
  <path d="M100 337 h20 l-6 18 l-10 5 z" fill="#d0ccc0"/>
  <rect x="89" y="337" width="9" height="25" fill="#3a3028"/>
  <path d="M160 337 h63 v14 l-18 -2 l-20 4 l-25 -6 z" fill="#a8a49a"/>
  <ellipse cx="135" cy="350" rx="15" ry="12" fill="#9cc07a"/>
  <ellipse cx="152" cy="345" rx="8" ry="7" fill="#c0d8a0"/>
  <ellipse cx="170" cy="358" rx="10" ry="6" fill="#5e7e48"/>
  <ellipse cx="192" cy="360" rx="14" ry="6" fill="#6a8a58"/>
  <ellipse cx="212" cy="372" rx="12" ry="16" fill="#4e6e3a"/>
  <ellipse cx="78" cy="378" rx="14" ry="9" fill="#4f7a3e"/>
  <ellipse cx="98" cy="365" rx="9" ry="10" fill="#3e6a30"/>
  <ellipse cx="65" cy="392" rx="10" ry="6" fill="#6e9058"/>
  <path d="M106 368 L160 364 L195 380 L188 400 L172 412 L122 412 L106 392 Z" fill="#1f2a24"/>
  <path d="M125 372 L150 370 L158 395 L140 405 L125 395 Z" fill="#2c3c30"/>
  <path d="M145 392 L162 394 L166 412 L142 412 Z" fill="#5c7c98"/>
  <path d="M158 374 L168 373 L170 390 L160 390 Z" fill="#44604a"/>
  <path d="M113 358 L126 357 L133 371 L137 382 L124 384 L118 372 Z" fill="#a27a50"/>
  <path d="M170 364 L194 363 L197 373 L174 376 Z" fill="#3a3e40"/>
  <path d="M186 390 L204 383 L214 393 L210 406 L189 406 Z" fill="#a8a08a"/>
  <path d="M47 400 L90 396 L110 412 L47 412 Z" fill="#7d8a72"/>
  <ellipse cx="80" cy="404" rx="18" ry="6" fill="#a4ac9c"/>
  <ellipse cx="200" cy="410" rx="10" ry="4" fill="#c8c0b0"/>
 </g></g>
</g>
<g filter="url(#tsh)"><rect x="48" y="432.9" width="175" height="98" rx="4" fill="#fff"/></g>
<g clip-path="url(#c2)"><use href="#tmpl" transform="translate(48 432.9) scale(0.18558) translate(-438 -337)"/>
 <text x="100" y="446.3" font-family="Liberation Serif, serif" font-weight="bold" font-size="5.6" fill="#2f3d5e" textLength="70.9" lengthAdjust="spacingAndGlyphs">ВИБІР МІСЦЯ ДЛЯ ВОДОЙМИ</text>
 <g stroke="#6a6a6a" stroke-width="0.7" opacity="0.6">
  <path d="M55 450 h103 M55 453.5 h103 M55 457 h60"/>
  <path d="M55 461 h53 M55 464.5 h53 M55 468 h53 M55 471.5 h53 M55 475 h40"/>
  <path d="M55 479 h53 M55 482.5 h53 M55 486 h53 M55 489.5 h53 M55 493 h53 M55 496.5 h53 M55 500 h53 M55 503.5 h53 M55 507 h45"/>
  <path d="M55 512 h53 M55 515.5 h53 M55 519 h45"/>
 </g>
 <g filter="url(#pb)">
  <rect x="111" y="459" width="54.7" height="30" fill="#3e4a35"/>
  <path d="M113 470 q25 -10 45 -3 v4 q-20 -6 -45 3 z" fill="#5a5a52"/>
  <ellipse cx="130" cy="478" rx="14" ry="6" fill="#8a9a88"/>
  <ellipse cx="125" cy="486" rx="12" ry="4" fill="#6d8a4a"/>
  <ellipse cx="157" cy="480" rx="8" ry="9" fill="#2a3a28"/>
  <rect x="166.4" y="453" width="53.2" height="30.7" fill="#5f9a55"/>
  <ellipse cx="195" cy="472" rx="22" ry="9" fill="#4ea890"/>
  <ellipse cx="175" cy="470" rx="7" ry="12" fill="#d8e8c8"/>
  <ellipse cx="190" cy="458" rx="18" ry="5" fill="#3a6a30"/>
  <ellipse cx="208" cy="480" rx="10" ry="3" fill="#e8efe0"/>
  <rect x="111" y="495.4" width="54.7" height="32.1" fill="#5b6a48"/>
  <ellipse cx="140" cy="509" rx="18" ry="7" fill="#a0a8a0"/>
  <ellipse cx="120" cy="500" rx="10" ry="5" fill="#8aa060"/>
  <ellipse cx="125" cy="522" rx="15" ry="5" fill="#4d6a35"/>
  <rect x="166.4" y="489.2" width="53.2" height="31.4" fill="#3f7a38"/>
  <ellipse cx="193" cy="510" rx="18" ry="7" fill="#3a5a58"/>
  <ellipse cx="191" cy="501" rx="5" ry="6" fill="#c0d0d0"/>
  <ellipse cx="178" cy="516" rx="9" ry="3" fill="#d8a0a0"/>
  <ellipse cx="180" cy="494" rx="14" ry="4" fill="#6aa050"/>
 </g>
</g>
<g filter="url(#tsh)"><rect x="48" y="551.1" width="175" height="98.4" rx="4" fill="#fff"/></g>
<g clip-path="url(#c3)"><use href="#tmpl" transform="translate(48 551.1) scale(0.18558) translate(-438 -337)"/>
 <text x="113" y="564.5" font-family="Liberation Serif, serif" font-weight="bold" font-size="5" fill="#2f3d5e" textLength="45.2" lengthAdjust="spacingAndGlyphs">ФОРМА ВОДОЙМИ</text>
 <g stroke="#6a6a6a" stroke-width="0.7" opacity="0.6">
  <path d="M65 570 h150 M59 573.8 h60 M65 578 h150 M65 582 h150 M59 585.5 h10 M65 589 h115"/>
 </g>
 <g filter="url(#pb)">
  <rect x="58" y="592.8" width="65.6" height="49.9" fill="#556a45"/>
  <rect x="82" y="593" width="22" height="9" fill="#9a9a95"/>
  <rect x="58" y="602" width="65.6" height="6" fill="#2f4a2a"/>
  <path d="M68 610 h46 l8 32 h-62 z" fill="#a8aaa5"/>
  <path d="M76 613 h30 l4 24 h-38 z" fill="#56645c"/>
  <rect x="91" y="605" width="2" height="10" fill="#e8eef0"/>
  <rect x="58" y="636" width="65.6" height="6.7" fill="#7a7670"/>
  <rect x="128.1" y="592.1" width="90.2" height="50.6" fill="#4a6a38"/>
  <ellipse cx="175" cy="598" rx="40" ry="6" fill="#3a4a30"/>
  <path d="M150 595 h16 l2 20 h-18 z" fill="#7a4a3a"/>
  <path d="M147 596 l10 -4 l12 4 z" fill="#b08080"/>
  <ellipse cx="175" cy="622" rx="20" ry="7" fill="#2e3a35"/>
  <ellipse cx="182" cy="620" rx="8" ry="5" fill="#9aaab8"/>
  <ellipse cx="205" cy="630" rx="14" ry="10" fill="#5aa040"/>
  <ellipse cx="140" cy="632" rx="12" ry="8" fill="#6aa848"/>
  <ellipse cx="185" cy="638" rx="15" ry="5" fill="#9a8a8a"/>
  <ellipse cx="202" cy="603" rx="10" ry="6" fill="#a06050"/>
 </g>
</g>
<g filter="url(#tsh)"><rect x="48" y="669.5" width="175" height="99" rx="4" fill="#fff"/></g>
<g clip-path="url(#c4)"><use href="#tmpl" transform="translate(48 669.5) scale(0.18558) translate(-438 -337)"/>
 <text x="83.7" y="684.5" font-family="Liberation Serif, serif" font-weight="bold" font-size="5.2" fill="#2f3d5e" textLength="103.8" lengthAdjust="spacingAndGlyphs">МАТЕРІАЛ ДЛЯ ВЛАШТУВАННЯ ВОДОЙМИ</text>
 <g stroke="#6a6a6a" stroke-width="0.7" opacity="0.6">
  <path d="M62 689 h66 M62 693 h66 M62 697.5 h66 M62 701.5 h60 M62 706 h10 M62 710 h60 M62 714 h60 M62 718 h30"/>
  <path d="M136 736 h70 M136 740 h75 M136 744 h72 M136 748 h20 M136 752 h72 M136 756 h40"/>
 </g>
 <g filter="url(#pb)">
  <rect x="61.2" y="719.4" width="68.3" height="42.3" fill="#9aa8a0"/>
  <rect x="61.2" y="719.4" width="68.3" height="12" fill="#5a8a48"/>
  <rect x="79" y="721" width="8" height="10" fill="#8a5a4a"/>
  <ellipse cx="110" cy="727" rx="6" ry="4" fill="#e0e0e0"/>
  <ellipse cx="90" cy="742" rx="30" ry="9" fill="#cdd0d2"/>
  <ellipse cx="90" cy="741" rx="18" ry="6" fill="#3a4a45"/>
  <ellipse cx="70" cy="752" rx="8" ry="5" fill="#8a6a8a"/>
  <rect x="61.2" y="757" width="68.3" height="4.7" fill="#6a9a50"/>
  <rect x="135.4" y="686.6" width="77.4" height="46.4" fill="#6a6e68"/>
  <rect x="135.4" y="723" width="77.4" height="10" fill="#8a8a80"/>
  <path d="M137 712 q-2 -15 20 -20 q25 -6 40 3 q15 14 5 25 q-20 12 -45 6 q-18 -3 -20 -14 z" fill="#b46c42"/>
  <path d="M147 710 q0 -10 16 -13 q18 -3 28 4 q8 8 0 16 q-15 6 -30 3 q-13 -3 -14 -10 z" fill="#9a5a38"/>
  <ellipse cx="166" cy="712" rx="5" ry="4" fill="#7a4a30"/>
  <ellipse cx="197" cy="696" rx="3" ry="4" fill="#e0e4ea"/>
  <rect x="205" y="700" width="7" height="20" fill="#7a6a5a"/>
 </g>
</g>
<!-- thumb 5 (selected) -->
<rect x="45.75" y="786.75" width="179.5" height="80" rx="5" fill="#fff" stroke="#8d1b1b" stroke-width="2.5"/>
<g clip-path="url(#c5)"><use href="#slidecontent" transform="translate(47.5 788) scale(0.18664) translate(-438 -337)"/></g>
</svg>

<svg class="a" style="left:438px;top:337px" width="943" height="505" viewBox="438 337 943 505" font-family="Liberation Serif, serif">
<defs>
 <linearGradient id="sbg" gradientUnits="userSpaceOnUse" x1="0" y1="337" x2="0" y2="867">
  <stop offset="0" stop-color="#ffffff"/><stop offset="0.25" stop-color="#fbfbfc"/><stop offset="0.6" stop-color="#eeeef0"/><stop offset="0.85" stop-color="#cfcfd2"/><stop offset="1" stop-color="#c2c2c6"/>
 </linearGradient>
 <radialGradient id="drop" cx="0.45" cy="0.42" r="0.58"><stop offset="0" stop-color="#ffffff"/><stop offset="0.72" stop-color="#f6f6f7"/><stop offset="0.9" stop-color="#e4e4e6"/><stop offset="1" stop-color="#bfbfc2"/></radialGradient>
 <filter id="dsh" x="-30%" y="-30%" width="160%" height="160%"><feGaussianBlur stdDeviation="1.2"/></filter>
 <linearGradient id="bodyL" x1="0" y1="0" x2="0" y2="1"><stop offset="0" stop-color="#363b34"/><stop offset="0.6" stop-color="#30352f"/><stop offset="1" stop-color="#2b2f29"/></linearGradient>
 <linearGradient id="inL" x1="0" y1="0" x2="0" y2="1"><stop offset="0" stop-color="#272b25"/><stop offset="1" stop-color="#30342e"/></linearGradient>
 <linearGradient id="inR" x1="0" y1="1" x2="1" y2="0"><stop offset="0" stop-color="#667b5c"/><stop offset="0.4" stop-color="#4d6345"/><stop offset="1" stop-color="#53694b"/></linearGradient>
 <linearGradient id="brR" x1="0" y1="0" x2="1" y2="0"><stop offset="0" stop-color="#84693e"/><stop offset="0.5" stop-color="#937849"/><stop offset="1" stop-color="#8c7244"/></linearGradient>
 <g id="dropg"><ellipse cx="2" cy="3" rx="10" ry="10" fill="#8c8c8e" filter="url(#dsh)" opacity="0.8"/><ellipse rx="10" ry="10" fill="url(#drop)"/></g>
</defs>
<g id="slidecontent"><g id="tmpl">
<rect x="438" y="337" width="943" height="530" fill="url(#sbg)"/>
<!-- drops top-left -->
<g transform="translate(497 359)"><g transform="rotate(-47)"><ellipse cx="3" cy="3" rx="58" ry="46" fill="#8f8f91" filter="url(#dsh)" opacity="0.75"/><ellipse rx="58" ry="46" fill="url(#drop)" stroke="#e2e2e4" stroke-width="0.8"/></g></g>
<g transform="translate(596 340) rotate(-20)"><ellipse cx="2" cy="3" rx="33" ry="21" fill="#8f8f91" filter="url(#dsh)" opacity="0.75"/><ellipse rx="33" ry="21" fill="url(#drop)"/></g>
<g transform="translate(626.3 372.4)"><ellipse cx="1.5" cy="2" rx="10" ry="11" fill="#8f8f91" filter="url(#dsh)" opacity="0.75"/><ellipse rx="10" ry="11" fill="url(#drop)"/></g>
<g transform="translate(502.5 423)"><ellipse cx="1" cy="1.5" rx="5.5" ry="5.5" fill="#8f8f91" filter="url(#dsh)" opacity="0.7"/><ellipse rx="5.5" ry="5.5" fill="url(#drop)"/></g>
<g transform="translate(484.3 448.8)"><ellipse cx="1.5" cy="2" rx="9" ry="9" fill="#8f8f91" filter="url(#dsh)" opacity="0.75"/><ellipse rx="9" ry="9" fill="url(#drop)"/></g>
<!-- drops top-right -->
<g transform="translate(1277 336)"><ellipse cx="2" cy="3" rx="32" ry="20" fill="#8f8f91" filter="url(#dsh)" opacity="0.75"/><ellipse rx="32" ry="20" fill="url(#drop)"/></g>
<g transform="translate(1320 406)"><ellipse cx="1.5" cy="2.5" rx="15" ry="15" fill="#8f8f91" filter="url(#dsh)" opacity="0.75"/><ellipse rx="15" ry="15" fill="url(#drop)"/></g>
</g>
<!-- title -->
<text x="727.7" y="417" font-family="Liberation Serif, serif" font-weight="bold" font-size="27" fill="#30496d" textLength="363.7" lengthAdjust="spacingAndGlyphs">КОНСТРУКЦІЇ ДЛЯ ВОДОЙМ</text>
<!-- image -->
<rect x="446" y="474" width="928" height="333.5" fill="#fefefe"/>
<!-- bottom drops -->
<g transform="translate(985 828)"><ellipse cx="1" cy="1.5" rx="6" ry="6" fill="#8f8f91" filter="url(#dsh)" opacity="0.5"/><ellipse rx="6" ry="6" fill="#d9d9dc" stroke="#eeeeef" stroke-width="1"/></g>
<g transform="translate(1033 826)"><ellipse cx="1" cy="2" rx="17" ry="17" fill="#8f8f91" filter="url(#dsh)" opacity="0.5"/><ellipse rx="17" ry="17" fill="#d8d8db" stroke="#efeff0" stroke-width="1.5"/></g>
<g transform="translate(1131 845)"><ellipse rx="16" ry="12" fill="#d6d6d9" stroke="#ececed" stroke-width="1.5"/></g>
<g transform="translate(1208 840)"><ellipse rx="5" ry="5" fill="#d6d6d9" stroke="#ececed" stroke-width="1"/></g>
<g transform="translate(1300 835) rotate(-20)"><ellipse rx="38" ry="24" fill="#d4d4d7" stroke="#ececed" stroke-width="1.5"/></g>
<!-- captions -->
<g font-family="Liberation Serif, serif" fill="#1a1a1a">
 <text x="632.5" y="497.5" font-weight="bold" font-size="10.3" textLength="107" lengthAdjust="spacingAndGlyphs">ЛИТА КОНСТРУКЦІЯ З</text>
 <text x="623.5" y="508.4" font-weight="bold" font-size="10.3" textLength="125" lengthAdjust="spacingAndGlyphs">АРМОВАНОЇ ПЛАСТМАСИ</text>
 <text x="1049" y="507.8" font-weight="bold" font-size="11" textLength="231.5" lengthAdjust="spacingAndGlyphs">ЛИТА КОНСТРУКЦІЯ ЗІ СКЛОВОЛОКНА</text>
 <g font-style="italic" font-size="12.5" stroke="#1a1a1a" stroke-width="0.22">
  <text x="474.2" y="544.5" textLength="64.6" lengthAdjust="spacingAndGlyphs">конструкція</text>
  <text x="463.5" y="559" textLength="86.6" lengthAdjust="spacingAndGlyphs">"трилисник" для</text>
  <text x="453.9" y="573.7" textLength="104.4" lengthAdjust="spacingAndGlyphs">регулярного ставка</text>
  <text x="834.6" y="536" textLength="115.3" lengthAdjust="spacingAndGlyphs">поглиблення служить</text>
  <text x="832.4" y="550.6" textLength="120.4" lengthAdjust="spacingAndGlyphs">для розміщення насоса</text>
  <text x="961.9" y="544.2" textLength="139.9" lengthAdjust="spacingAndGlyphs">якщо ви хочете утримувати</text>
  <text x="968.1" y="558.4" textLength="127.3" lengthAdjust="spacingAndGlyphs">риб глибина повинна бути</text>
  <text x="994.2" y="571.9" textLength="76" lengthAdjust="spacingAndGlyphs">більше 45-60 см</text>
  <text x="1187.1" y="538.4" textLength="66.2" lengthAdjust="spacingAndGlyphs">прибережний</text>
  <text x="1185.4" y="552.8" textLength="69.6" lengthAdjust="spacingAndGlyphs">виступ більше</text>
  <text x="1207.5" y="566.4" textLength="25.4" lengthAdjust="spacingAndGlyphs">22 см</text>
 </g>
</g>
<!-- left pond -->
<g>
 <path d="M538.4 694.3 C538.0 690.7 538.6 691.1 539.6 687.3 C540.6 683.4 541.7 676.0 544.4 671.2 C547.1 666.4 552.0 662.1 555.7 658.4 C559.5 654.7 564.0 652.0 566.9 648.8 C569.8 645.6 571.7 643.8 573.3 639.2 C574.9 634.7 574.9 626.0 576.5 621.5 C578.1 617.0 579.7 615.1 582.9 611.9 C586.1 608.7 590.7 605.2 595.8 602.3 C600.9 599.3 607.0 596.5 613.4 594.2 C619.8 591.9 626.7 590.1 634.2 588.6 C641.7 587.1 650.3 585.9 658.3 585.4 C666.3 584.9 674.4 585.1 682.4 585.4 C690.4 585.7 700.1 586.3 706.4 587.0 C712.7 587.7 713.7 588.2 720.0 589.6 C726.3 591.0 737.0 592.8 744.0 595.2 C751.0 597.6 756.9 601.5 761.7 604.0 C766.5 606.5 766.5 608.9 772.9 610.5 C779.3 612.1 791.7 612.4 800.2 613.7 C808.8 615.0 816.2 616.4 824.2 618.5 C832.2 620.6 840.3 623.6 848.3 626.5 C856.3 629.4 865.7 632.6 872.4 636.1 C879.1 639.6 883.9 643.4 888.4 647.4 C892.9 651.4 896.9 655.4 899.6 660.2 C902.3 665.0 903.5 672.6 904.4 676.2 C905.3 679.8 905.5 679.3 905.2 682.0 C904.9 684.7 904.3 688.4 902.8 692.3 C901.3 696.1 900.8 702.5 896.4 705.1 C892.0 707.7 880.7 705.8 876.6 708.0 C872.5 710.2 873.0 713.7 871.8 718.2 C870.6 722.7 871.4 729.8 869.4 735.0 C867.4 740.2 864.6 745.7 859.8 749.3 C855.0 752.9 851.8 754.9 840.7 756.5 C829.6 758.1 805.0 758.1 793.0 758.9 C781.0 759.7 774.2 759.3 769.0 761.3 C763.8 763.3 764.2 767.2 761.8 770.8 C759.4 774.4 759.5 779.2 754.7 782.8 C749.9 786.4 742.8 789.7 733.2 792.3 C723.6 794.9 709.2 797.5 697.3 798.3 C685.3 799.1 673.5 798.9 661.5 797.1 C649.5 795.3 636.8 792.0 625.6 787.6 C614.4 783.2 602.9 776.8 594.5 770.8 C586.1 764.8 579.8 758.5 575.4 751.7 C571.0 744.9 571.8 735.4 568.2 730.2 C564.6 725.0 558.3 724.2 553.9 720.6 C549.5 717.0 544.6 713.1 542.0 708.7 C539.4 704.3 538.8 697.9 538.4 694.3Z" fill="url(#bodyL)"/>
 <path d="M538.4 694.3 C538.4 691.5 538.6 691.1 539.6 687.3 C540.6 683.4 541.7 676.0 544.4 671.2 C547.1 666.4 552.0 662.1 555.7 658.4 C559.5 654.7 564.0 652.0 566.9 648.8 C569.8 645.6 571.7 643.8 573.3 639.2 C574.9 634.7 574.9 626.0 576.5 621.5 C578.1 617.0 579.7 615.1 582.9 611.9 C586.1 608.7 590.7 605.2 595.8 602.3 C600.9 599.3 607.0 596.5 613.4 594.2 C619.8 591.9 626.7 590.1 634.2 588.6 C641.7 587.1 650.3 585.9 658.3 585.4 C666.3 584.9 674.4 585.1 682.4 585.4 C690.4 585.7 700.1 586.3 706.4 587.0 C712.7 587.7 713.7 588.2 720.0 589.6 C726.3 591.0 737.0 592.8 744.0 595.2 C751.0 597.6 756.9 601.5 761.7 604.0 C766.5 606.5 766.5 608.9 772.9 610.5 C779.3 612.1 791.7 612.4 800.2 613.7 C808.8 615.0 816.2 616.4 824.2 618.5 C832.2 620.6 840.3 623.6 848.3 626.5 C856.3 629.4 865.7 632.6 872.4 636.1 C879.1 639.6 883.9 643.4 888.4 647.4 C892.9 651.4 896.9 655.4 899.6 660.2 C902.3 665.0 903.5 672.6 904.4 676.2 C905.3 679.8 905.4 680.6 905.2 682.0 C905.1 683.4 908.3 681.1 903.5 684.8 C898.7 688.4 887.1 699.5 876.6 703.9 C866.1 708.3 854.6 709.1 840.7 711.1 C826.8 713.1 808.9 712.5 793.0 715.9 C777.1 719.3 763.4 725.4 745.1 731.4 C726.8 737.4 704.9 749.9 683.0 751.7 C661.1 753.5 632.8 746.5 613.7 742.1 C594.6 737.7 580.6 731.8 568.2 725.4 C555.9 719.0 544.6 709.1 539.6 703.9 C534.6 698.7 538.4 697.1 538.4 694.3Z" fill="#52574f"/>
 <path d="M554.1 679.8 C555.8 676.0 560.8 670.9 564.2 666.9 C567.5 662.9 571.3 659.7 574.3 655.6 C577.2 651.4 580.2 647.4 581.8 642.2 C583.4 637.0 583.0 628.3 584.0 624.2 C585.1 620.0 585.6 619.9 588.2 617.2 C590.7 614.6 594.7 611.1 599.3 608.4 C603.9 605.6 609.7 602.9 615.8 600.8 C621.8 598.6 628.4 596.9 635.5 595.5 C642.7 594.1 651.0 592.9 658.8 592.4 C666.5 591.9 674.4 592.1 682.2 592.4 C690.0 592.7 699.6 593.3 705.6 594.0 C711.7 594.6 712.5 595.1 718.5 596.4 C724.5 597.7 735.1 599.5 741.7 601.8 C748.4 604.1 753.5 607.6 758.4 610.2 C763.3 612.8 764.4 615.5 771.2 617.3 C778.0 619.0 790.6 619.3 799.1 620.6 C807.7 621.9 814.6 623.1 822.4 625.3 C830.2 627.4 838.0 630.6 845.7 633.5 C853.4 636.5 862.6 639.8 868.7 643.2 C874.8 646.6 878.7 650.1 882.4 654.1 C886.2 658.2 889.7 663.0 891.3 667.4 C892.9 671.9 894.9 676.1 892.0 681.0 C889.1 685.9 883.5 692.5 874.2 696.7 C864.9 700.9 849.5 703.9 836.0 706.3 C822.5 708.7 808.1 707.9 793.0 711.1 C777.9 714.3 763.4 719.6 745.1 725.4 C726.8 731.2 702.9 744.3 683.0 745.7 C663.1 747.1 642.3 738.4 625.6 733.8 C608.9 729.2 594.5 725.5 582.6 718.2 C570.7 710.9 558.7 696.4 554.0 690.0 C549.3 683.6 552.5 683.7 554.1 679.8Z" fill="#2e332d"/>
 <path d="M588.0 726.0 C584.6 718.5 601.1 700.0 605.5 689.7 C609.9 679.4 607.0 671.6 614.1 664.0 C621.2 656.4 635.5 648.4 648.3 644.1 C661.1 639.8 676.8 638.2 691.0 638.4 C705.2 638.6 723.8 640.7 733.8 645.5 C743.8 650.3 743.9 662.5 751.0 667.0 C758.1 671.5 765.2 670.7 776.6 672.6 C788.0 674.5 806.1 674.5 819.4 678.3 C832.7 682.1 849.3 691.1 856.4 695.4 C863.5 699.7 871.4 700.9 862.0 704.0 C852.6 707.1 819.5 710.2 800.0 714.0 C780.5 717.8 764.5 721.8 745.0 727.0 C725.5 732.2 702.8 743.7 683.0 745.0 C663.2 746.3 641.8 738.2 626.0 735.0 C610.2 731.8 591.4 733.5 588.0 726.0Z" fill="#393e37"/>
 <path d="M620.0 738.0 C609.9 728.8 617.9 701.1 622.6 689.7 C627.3 678.3 636.9 674.3 648.3 669.8 C659.7 665.3 674.4 662.7 691.0 662.7 C707.6 662.7 733.7 664.8 748.0 669.8 C762.3 674.8 769.6 684.9 776.6 692.6 C783.6 700.3 795.3 710.3 790.0 716.0 C784.7 721.7 762.8 722.2 745.0 727.0 C727.2 731.8 703.8 743.2 683.0 745.0 C662.2 746.8 630.1 747.2 620.0 738.0Z" fill="#2c302b"/>
 <path d="M588.0 726.0 C590.9 720.0 601.1 700.0 605.5 689.7 C609.9 679.4 607.0 671.6 614.1 664.0 C621.2 656.4 635.5 648.4 648.3 644.1 C661.1 639.8 676.8 638.2 691.0 638.4 C705.2 638.6 723.8 640.7 733.8 645.5 C743.8 650.3 743.9 662.5 751.0 667.0 C758.1 671.5 765.2 670.7 776.6 672.6 C788.0 674.5 806.1 674.5 819.4 678.3 C832.7 682.1 849.3 691.1 856.4 695.4 C863.5 699.7 861.1 702.6 862.0 704.0" fill="none" stroke="#555a52" stroke-width="1.8"/>
 <path d="M620.0 738.0 C620.4 730.0 617.9 701.1 622.6 689.7 C627.3 678.3 636.9 674.3 648.3 669.8 C659.7 665.3 674.4 662.7 691.0 662.7 C707.6 662.7 733.7 664.8 748.0 669.8 C762.3 674.8 769.6 684.9 776.6 692.6 C783.6 700.3 787.8 712.1 790.0 716.0" fill="none" stroke="#555a52" stroke-width="1.8"/>
 <path d="M650.0 742.0 C651.7 738.7 655.0 727.0 660.0 722.0 C665.0 717.0 670.8 713.8 680.0 712.0 C689.2 710.2 705.0 709.3 715.0 711.0 C725.0 712.7 735.8 720.2 740.0 722.0" fill="none" stroke="#474c45" stroke-width="1.5"/>
 <g stroke="#62675f" stroke-width="1.2"><path d="M564.2 666.9 l4.2 4.3"/><path d="M581.8 642.2 l5.7 2.0"/><path d="M588.2 617.2 l4.2 4.3"/><path d="M615.8 600.8 l2.0 5.7"/><path d="M658.8 592.4 l0.4 6.0"/><path d="M705.6 594.0 l-0.7 6.0"/><path d="M741.7 601.8 l-2.0 5.7"/><path d="M771.2 617.3 l-1.5 5.8"/><path d="M822.4 625.3 l-1.5 5.8"/><path d="M868.7 643.2 l-2.8 5.3"/></g>
</g>
<!-- right pond -->
<g>
 <path d="M1015.0 755.0 C1027.5 753.3 1078.3 762.5 1100.0 760.0 C1121.7 757.5 1132.5 750.0 1145.0 740.0 C1157.5 730.0 1165.0 710.0 1175.0 700.0 C1185.0 690.0 1192.5 684.3 1205.0 680.0 C1217.5 675.7 1234.8 675.3 1250.0 674.0 C1265.2 672.7 1286.7 671.7 1296.0 672.0 C1305.3 672.3 1305.3 673.0 1306.0 676.0 C1306.7 679.0 1305.2 680.6 1300.0 690.0 C1294.8 699.4 1288.3 724.2 1275.0 732.5 C1261.7 740.8 1233.3 738.2 1220.0 740.0 C1206.7 741.8 1204.2 738.3 1195.0 743.0 C1185.8 747.7 1173.9 760.8 1165.0 768.0 C1156.1 775.2 1151.4 782.1 1141.4 786.5 C1131.4 790.9 1117.9 794.0 1104.8 794.4 C1091.7 794.8 1072.6 791.6 1063.0 789.0 C1053.4 786.4 1053.3 781.9 1047.0 778.7 C1040.7 775.5 1030.3 774.0 1025.0 770.0 C1019.7 766.0 1002.5 756.7 1015.0 755.0Z" fill="url(#brR)"/>
 <path d="M1312.0 630.0 C1316.3 625.0 1332.7 623.7 1340.0 622.0 C1347.3 620.3 1354.3 618.3 1356.0 620.0 C1357.7 621.7 1353.5 627.5 1350.0 632.0 C1346.5 636.5 1341.0 643.7 1335.0 647.0 C1329.0 650.3 1317.8 654.8 1314.0 652.0 C1310.2 649.2 1307.7 635.0 1312.0 630.0Z" fill="#8c7244"/>
 <path d="M1001.5 736.9 C1001.5 731.2 1002.7 724.3 1005.5 718.6 C1008.3 712.9 1013.3 707.7 1018.5 702.9 C1023.7 698.1 1029.8 693.5 1036.8 689.8 C1043.8 686.1 1052.1 684.0 1060.4 680.7 C1068.7 677.4 1079.1 673.9 1086.5 670.2 C1093.9 666.5 1099.6 662.5 1104.8 658.4 C1110.0 654.3 1115.9 650.2 1117.9 645.4 C1119.9 640.6 1115.7 634.1 1116.6 629.7 C1117.5 625.3 1119.0 622.2 1123.1 619.2 C1127.2 616.2 1133.1 612.9 1141.4 611.4 C1149.7 609.9 1162.4 609.8 1172.8 610.0 C1183.2 610.2 1191.5 613.3 1203.8 612.8 C1216.1 612.3 1232.3 610.4 1246.6 607.1 C1260.9 603.8 1277.5 595.6 1289.4 592.8 C1301.3 589.9 1307.0 589.5 1317.9 590.0 C1328.8 590.5 1346.5 592.9 1355.0 595.7 C1363.5 598.6 1367.3 603.1 1369.2 607.1 C1371.1 611.1 1369.6 616.6 1366.3 619.9 C1363.0 623.2 1355.8 625.6 1349.2 627.0 C1342.6 628.4 1332.1 626.7 1326.4 628.4 C1320.7 630.1 1316.4 633.0 1315.0 637.0 C1313.6 641.0 1318.9 647.2 1317.9 652.7 C1317.0 658.2 1313.6 665.5 1309.3 669.8 C1305.0 674.1 1302.7 676.5 1292.2 678.3 C1281.8 680.1 1259.9 679.5 1246.6 680.6 C1233.3 681.7 1221.0 683.1 1212.4 684.6 C1203.8 686.1 1199.4 687.2 1195.0 689.8 C1190.6 692.4 1190.4 694.2 1185.8 700.3 C1181.2 706.4 1174.0 717.7 1167.5 726.4 C1161.0 735.1 1154.4 745.8 1146.6 752.5 C1138.8 759.2 1130.5 763.4 1120.5 766.9 C1110.5 770.4 1098.7 772.2 1086.5 773.5 C1074.3 774.8 1058.2 775.7 1047.3 774.8 C1036.4 773.9 1028.1 771.9 1021.1 768.2 C1014.1 764.5 1008.8 757.7 1005.5 752.5 C1002.2 747.3 1001.5 742.5 1001.5 736.9Z" fill="#a3aa99"/>
 <path d="M1006.0 736.9 C1006.0 732.0 1006.9 725.7 1009.5 720.6 C1012.1 715.5 1016.7 710.7 1021.5 706.2 C1026.4 701.7 1032.2 697.3 1038.9 693.8 C1045.7 690.2 1053.8 688.1 1062.1 684.9 C1070.3 681.6 1080.9 678.0 1088.5 674.2 C1096.1 670.4 1102.0 666.4 1107.6 661.9 C1113.2 657.4 1119.8 652.3 1122.1 647.1 C1124.3 641.9 1120.4 634.6 1121.0 630.6 C1121.6 626.5 1122.2 625.3 1125.8 622.8 C1129.3 620.4 1134.4 617.2 1142.2 615.8 C1150.0 614.4 1162.4 614.3 1172.7 614.5 C1183.0 614.7 1191.5 617.8 1204.0 617.3 C1216.5 616.8 1233.2 614.8 1247.6 611.5 C1262.0 608.1 1278.8 600.0 1290.4 597.2 C1302.1 594.3 1307.2 594.0 1317.7 594.5 C1328.2 595.0 1345.7 597.6 1353.6 600.0 C1361.5 602.4 1363.5 606.2 1365.1 609.0 C1366.7 611.8 1365.9 614.4 1363.1 616.7 C1360.3 619.0 1354.6 621.4 1348.3 622.6 C1341.9 623.8 1331.4 621.9 1325.1 624.1 C1318.9 626.2 1312.7 630.9 1310.8 635.5 C1308.8 640.2 1314.2 646.7 1313.5 651.9 C1312.7 657.1 1309.8 663.0 1306.1 666.6 C1302.5 670.3 1301.4 672.3 1291.4 673.9 C1281.5 675.4 1259.6 675.1 1246.2 676.1 C1232.9 677.2 1220.5 678.5 1211.6 680.2 C1202.7 681.8 1197.6 683.0 1192.7 685.9 C1187.8 688.8 1187.0 691.3 1182.2 697.6 C1177.4 703.9 1170.3 715.1 1163.9 723.7 C1157.5 732.3 1151.1 742.6 1143.7 749.1 C1136.2 755.6 1128.6 759.3 1119.0 762.7 C1109.4 766.0 1097.9 767.7 1086.0 769.0 C1074.1 770.3 1058.1 771.1 1047.7 770.3 C1037.2 769.5 1029.6 767.6 1023.2 764.2 C1016.8 760.9 1012.2 754.7 1009.3 750.1 C1006.4 745.6 1006.0 741.8 1006.0 736.9Z" fill="#65795c"/>
 <path d="M1012.5 736.9 C1012.6 733.0 1013.1 727.8 1015.3 723.5 C1017.6 719.2 1021.5 715.0 1025.9 711.0 C1030.4 707.0 1035.5 702.9 1041.9 699.5 C1048.4 696.2 1056.2 694.2 1064.4 690.9 C1072.7 687.7 1083.6 684.0 1091.4 680.0 C1099.3 676.0 1105.5 672.1 1111.6 667.0 C1117.7 662.0 1125.4 655.4 1128.1 649.6 C1130.7 643.7 1127.1 635.4 1127.4 631.8 C1127.6 628.3 1127.0 629.7 1129.6 628.1 C1132.3 626.4 1136.2 623.4 1143.4 622.2 C1150.6 621.0 1162.4 620.7 1172.6 621.0 C1182.7 621.3 1191.5 624.3 1204.2 623.8 C1217.0 623.3 1234.5 621.2 1249.1 617.8 C1263.7 614.4 1280.6 606.3 1292.0 603.5 C1303.4 600.7 1307.5 600.5 1317.4 601.0 C1327.3 601.4 1344.6 604.3 1351.5 606.1 C1358.5 607.9 1358.1 610.8 1359.2 611.8 C1360.4 612.7 1360.6 611.4 1358.5 612.1 C1356.5 612.9 1352.8 615.3 1346.9 616.2 C1341.0 617.2 1330.4 615.0 1323.3 617.8 C1316.3 620.7 1307.3 627.9 1304.6 633.4 C1301.9 638.9 1307.6 646.0 1307.1 650.8 C1306.5 655.6 1304.3 659.2 1301.5 662.0 C1298.7 664.8 1299.6 666.2 1290.3 667.5 C1281.0 668.7 1259.0 668.6 1245.7 669.6 C1232.4 670.7 1219.9 672.0 1210.5 673.8 C1201.1 675.6 1195.0 677.0 1189.4 680.3 C1183.8 683.6 1182.1 687.1 1177.0 693.7 C1171.9 700.3 1165.0 711.4 1158.7 719.8 C1152.4 728.2 1146.4 738.0 1139.4 744.2 C1132.4 750.3 1125.9 753.4 1116.9 756.5 C1107.9 759.6 1096.8 761.3 1085.3 762.6 C1073.9 763.8 1058.0 764.5 1048.2 763.8 C1038.3 763.2 1031.8 761.4 1026.3 758.5 C1020.7 755.6 1017.1 750.3 1014.8 746.7 C1012.5 743.1 1012.4 740.8 1012.5 736.9Z" fill="url(#inR)"/>
 <path d="M1039.4 752.5 C1038.5 748.1 1048.5 739.0 1055.0 734.0 C1061.5 729.0 1071.3 725.3 1078.7 722.5 C1086.1 719.7 1098.3 716.2 1099.6 717.3 C1100.9 718.4 1089.1 724.0 1086.5 729.0 C1083.9 734.0 1088.2 742.1 1083.9 747.3 C1079.6 752.5 1067.8 759.5 1060.4 760.4 C1053.0 761.3 1040.3 756.9 1039.4 752.5Z" fill="#7f9277"/>
 <path d="M1138.8 684.6 C1138.2 681.3 1145.4 664.1 1151.9 658.4 C1158.4 652.7 1167.0 651.5 1178.0 650.6 C1189.0 649.7 1216.1 650.9 1218.0 652.7 C1219.9 654.5 1200.0 656.9 1189.6 661.2 C1179.2 665.5 1163.9 674.4 1155.4 678.3 C1146.9 682.2 1139.4 687.9 1138.8 684.6Z" fill="#7d9075"/>
 <path d="M1260.9 639.8 C1261.4 638.1 1270.9 633.7 1278.0 631.3 C1285.1 628.9 1301.2 624.6 1303.6 625.6 C1306.0 626.6 1293.2 633.7 1292.2 637.0 C1291.2 640.3 1300.8 644.8 1297.9 645.5 C1295.0 646.2 1281.2 642.2 1275.0 641.3 C1268.8 640.3 1260.4 641.5 1260.9 639.8Z" fill="#7d9075"/>
</g>
<!-- arrows -->
<g stroke="#111" stroke-width="1.1" fill="#111">
 <path d="M509.5 578.4 L563 662" />
 <path d="M873.8 554.2 L762 669"/>
 <path d="M1000 585 L1122 731"/>
 <path d="M1240 574 L1292 633"/>
 <path d="M565.5 666 l-6.5 -4 l4.5 -3 z"/>
 <path d="M759.5 671.5 l2.5 -6.5 l4 3.5 z"/>
 <path d="M1124.5 734 l-6 -4 l4 -3.2 z"/>
 <path d="M1294 635.5 l-6 -3.5 l3.8 -3.3 z"/>
</g>
</g>
</svg>
<svg class="a" style="left:0;top:0" width="1590" height="842" viewBox="0 0 1590 842">
<rect x="1198" y="839.5" width="252" height="12" rx="5" fill="#f6f5f4" stroke="#d8d8d8" stroke-width="0.8"/>
<g transform="translate(1334 808)"><path d="M0 -7 l2.5 3 h-5 z M0 7 l2.5 -3 h-5 z M-7 0 l3 2.5 v-5 z M7 0 l-3 2.5 v-5 z M0 -5 v10 M-5 0 h10" fill="#111" stroke="#111" stroke-width="0.9"/><path d="M0 4 v16 l4 -4 l3 6 l2 -1 l-3 -6 h5 z" fill="#fff" stroke="#111" stroke-width="0.9"/></g>
</svg>
</body></html>
